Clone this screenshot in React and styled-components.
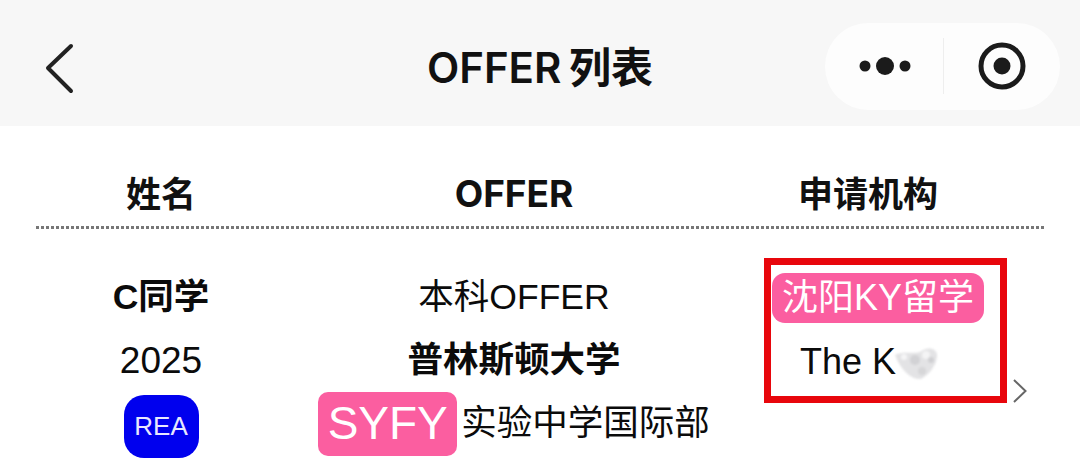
import React from 'react';
import styled, { createGlobalStyle } from 'styled-components';

const Global = createGlobalStyle`
  html, body {
    margin: 0;
    padding: 0;
    background: #fff;
  }
  body {
    font-family: "Liberation Sans", "Noto Sans CJK SC", sans-serif;
    color: #0b0b0b;
  }
`;

const Page = styled.div`
  width: 1080px;
  height: 461px;
  overflow: hidden;
`;

const NavBar = styled.header`
  height: 126px;
  background: #f7f7f7;
  display: grid;
  grid-template-columns: 1fr auto 1fr;
  align-items: center;
  padding: 0 20px;
  box-sizing: border-box;
`;

const BackButton = styled.svg`
  display: block;
  margin: 12px 0 0 25px;
`;

const Title = styled.h1`
  margin: 10px 0 0;
  font-family: Inter, "Noto Sans CJK SC", sans-serif;
  font-size: 42px;
  font-weight: 600;
  line-height: 50px;
  word-spacing: -3px;
  color: #111;
  white-space: nowrap;
`;

const Capsule = styled.div`
  justify-self: end;
  width: 235px;
  height: 87px;
  margin-top: 6px;
  border-radius: 44px;
  background: #fdfdfd;
  display: flex;
  align-items: center;
`;

const CapsuleSlot = styled.div`
  flex: ${({ $wide }) => ($wide ? '0 0 118px' : '1')};
  height: 56px;
  display: flex;
  align-items: center;
  justify-content: center;
  border-right: ${({ $wide }) => ($wide ? '1px solid #eee' : 'none')};
`;

const TableHead = styled.div`
  display: grid;
  grid-template-columns: 250px 456px 252px;
  margin: 0 36px;
  padding-top: 44px;
  height: 56px;
`;

const HeadCell = styled.div`
  text-align: center;
  font-family: Inter, "Noto Sans CJK SC", sans-serif;
  font-size: ${({ $size }) => $size || 35}px;
  font-weight: 700;
  line-height: 48px;
  color: #111;
`;

const DottedRule = styled.div`
  height: 3px;
  margin: 0 36px;
  background: repeating-linear-gradient(90deg, #777 0 3px, #fff 3px 5px);
`;

const TableRow = styled.div`
  display: grid;
  grid-template-columns: 250px 456px 271px 1fr;
  margin: 0 36px;
  padding-top: 29px;
  align-items: start;
`;

const Cell = styled.div`
  display: flex;
  flex-direction: column;
  align-items: center;
  padding-top: 8px;
`;

const Line = styled.div`
  display: flex;
  align-items: center;
  gap: 4px;
  height: 63px;
  line-height: 63px;
  font-size: ${({ $size }) => $size || 35.5}px;
  font-weight: ${({ $bold }) => ($bold ? 700 : 400)};
  white-space: nowrap;
`;

const Badge = styled.div`
  width: 75px;
  height: 63px;
  margin-top: 3px;
  border-radius: 20px;
  background: #0000ee;
  color: #e8e8ff;
  font-size: 26px;
  display: flex;
  align-items: center;
  justify-content: center;
`;

const MaskTag = styled.div`
  width: 139px;
  height: 64px;
  border-radius: 10px;
  background: #fb5ea0;
  color: #fff;
  font-size: 46px;
  display: flex;
  align-items: center;
  justify-content: center;
`;

const RedFrame = styled.div`
  margin-left: 22px;
  width: 243px;
  height: 145px;
  box-sizing: border-box;
  border: 7px solid #e8060c;
  padding: 8px 0 0 1px;
`;

const Tag = styled.div`
  width: 212px;
  height: 50px;
  border-radius: 13px;
  background: #fb5ea0;
  color: #fff;
  font-size: 36px;
  line-height: 50px;
  text-align: center;
  white-space: nowrap;
`;

const AgencyName = styled.div`
  display: flex;
  align-items: center;
  height: 62px;
  margin-top: 8px;
  padding-left: 28px;
  font-size: 36px;
  line-height: 62px;
`;

const Smudge = styled.svg`
  display: block;
  filter: blur(1.2px);
  margin: 2px 0 0 -2px;
`;

const RowArrow = styled.svg`
  display: block;
  margin-top: 120px;
  margin-left: -1px;
`;

export default function App() {
  return (
    <Page>
      <Global />
      <NavBar>
        <BackButton width="30" height="52" viewBox="0 0 30 52" fill="none">
          <path d="M26 3 L3 25 L26 48" stroke="#222" strokeWidth="4" strokeLinecap="round" strokeLinejoin="round" />
        </BackButton>
        <Title>OFFER 列表</Title>
        <Capsule>
          <CapsuleSlot $wide>
            <svg width="60" height="24" viewBox="0 0 60 24" fill="#1b1b1b">
              <circle cx="11" cy="12" r="5.5" />
              <circle cx="31" cy="12" r="9" />
              <circle cx="51" cy="12" r="5.5" />
            </svg>
          </CapsuleSlot>
          <CapsuleSlot>
            <svg width="50" height="50" viewBox="0 0 50 50" fill="none">
              <circle cx="25" cy="25" r="21" stroke="#1b1b1b" strokeWidth="5" />
              <circle cx="25" cy="25" r="8.5" fill="#1b1b1b" />
            </svg>
          </CapsuleSlot>
        </Capsule>
      </NavBar>

      <TableHead>
        <HeadCell>姓名</HeadCell>
        <HeadCell $size={37}>OFFER</HeadCell>
        <HeadCell>申请机构</HeadCell>
      </TableHead>
      <DottedRule />

      <TableRow>
        <Cell>
          <Line $bold>C同学</Line>
          <Line $size={37}>2025</Line>
          <Badge>REA</Badge>
        </Cell>
        <Cell>
          <Line>本科OFFER</Line>
          <Line $bold>普林斯顿大学</Line>
          <Line>
            <MaskTag>SYFY</MaskTag>
            实验中学国际部
          </Line>
        </Cell>
        <RedFrame>
          <Tag>沈阳KY留学</Tag>
          <AgencyName>
            The K
            <Smudge width="44" height="34" viewBox="0 0 44 34">
              <path d="M1 9 C8 5 18 8 26 6 C32 1 41 1 43 8 C44 18 35 29 27 33 C18 34 7 25 1 9 Z" fill="#e3e3e5" />
              <circle cx="10" cy="11" r="3" fill="#f6f6f7" />
              <circle cx="21" cy="14" r="5" fill="#d2d2d5" />
              <circle cx="32" cy="9" r="4" fill="#f4f4f5" />
              <circle cx="37" cy="14" r="3" fill="#cfcfd2" />
              <circle cx="28" cy="25" r="4" fill="#d6d6d8" />
            </Smudge>
          </AgencyName>
        </RedFrame>
        <RowArrow width="16" height="26" viewBox="0 0 16 26" fill="none">
          <path d="M2 2 L13.5 13 L2 24" stroke="#666" strokeWidth="2" />
        </RowArrow>
      </TableRow>
    </Page>
  );
}
